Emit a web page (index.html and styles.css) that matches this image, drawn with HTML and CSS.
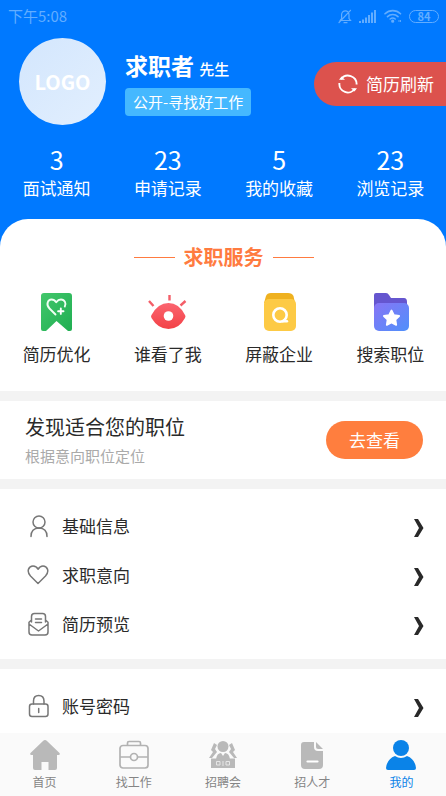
FILE: index.html
```html
<!DOCTYPE html>
<html lang="zh-CN">
<head>
<meta charset="utf-8">
<meta name="viewport" content="width=device-width, initial-scale=1">
<title>我的</title>
<link rel="stylesheet" href="styles.css">
</head>
<body>
<header class="hero">
  <div class="status">
    <span class="status-time">下午5:08</span>
    <div class="status-icons">
      <svg width="14" height="15" viewBox="0 0 14 15" fill="none" stroke="currentColor" stroke-width="1.2" stroke-linecap="round"><path d="M2 11.500h10.500L11 9.500V5.500a3.700 3.700 0 0 0-7.400 0v4L2 11.500M6 13.700h3M12.500 1.300 1 13.500"/></svg>
      <svg width="18" height="13" viewBox="0 0 18 13" fill="currentColor"><path d="M0 11h2v2H0zM3 9.500h2V13H3zM6 7.500h2V13H6zM9 5h2v8H9zM12 2.500h2V13h-2zM15 0h2v13h-2z"/></svg>
      <svg width="18" height="14" viewBox="0 0 18 14" fill="none" stroke="currentColor" stroke-width="1.600" stroke-linecap="round"><path d="M1 4.800a11 11 0 0 1 15.500 0M3.500 7.600a7.500 7.500 0 0 1 10.500 0M6.200 10a4 4 0 0 1 5 0"/><circle cx="8.700" cy="12.200" r=".8"/><path d="M15 11.500v1M16.500 11.500v1" stroke-width="1"/></svg>
      <span class="battery">84</span>
    </div>
  </div>
  <div class="profile">
    <div class="avatar">LOGO</div>
    <div class="identity">
      <h1 class="name">求职者 <small>先生</small></h1>
      <span class="tag">公开-寻找好工作</span>
    </div>
    <button class="refresh" type="button">
      <svg width="20" height="20" viewBox="0 0 20 20" fill="none" stroke="currentColor" stroke-width="1.900"><path d="M3 5.200A8.600 8.600 0 0 1 18.600 10.500M17 14.800A8.600 8.600 0 0 1 1.400 9"/><path d="M1 5.800 3.500 2.500l3.500 3.300zM19 14.200l-2.500 3.300-3.500-3.300z" fill="currentColor" stroke="none"/></svg>
      简历刷新
    </button>
  </div>
  <nav class="grid stats">
    <a href="#interviews"><b>3</b>面试通知</a>
    <a href="#applications"><b>23</b>申请记录</a>
    <a href="#favorites"><b>5</b>我的收藏</a>
    <a href="#history"><b>23</b>浏览记录</a>
  </nav>
</header>

<main class="content">
  <section class="services">
    <h2 class="services-title">求职服务</h2>
    <nav class="grid shortcuts">
      <a href="#optimize">
        <svg width="40" height="40" viewBox="0 0 40 40"><defs><linearGradient id="green" x2="1" y2="1"><stop stop-color="#42c76b"/><stop offset="1" stop-color="#20ae52"/></linearGradient></defs><path d="M7 1h25a3 3 0 0 1 3 3v33q0 2-2 2h-2L19.500 29 9 39H6q-2 0-2-2V4a3 3 0 0 1 3-3z" fill="url(#green)"/><path d="M18.500 22.500 12.500 16.500C8.500 12.500 11 7.500 14.500 7.500q2.800 0 4.700 2.800 2-2.800 4.800-2.800c3.800 0 5.500 4 3.800 7" fill="none" stroke="#effff3" stroke-width="1.900" stroke-linecap="round" stroke-linejoin="round"/><path d="M23.800 16.500v5.400M21.100 19.200h5.400" stroke="#fff" stroke-width="1.900" stroke-linecap="round"/></svg>
        简历优化</a>
      <a href="#viewers">
        <svg width="40" height="40" viewBox="0 0 40 40"><defs><linearGradient id="red" x2="0" y2="1"><stop stop-color="#fb6570"/><stop offset="1" stop-color="#f34146"/></linearGradient></defs><path d="M3.500 23Q10 11 20.500 11T37 23q1 1 0 3-6 11-16.500 11T3.500 26q-1-2 0-3z" fill="url(#red)"/><circle cx="20.500" cy="24" r="4.800" fill="#fff"/><path d="M21.500 8.500V3M5.500 14 1 9M32.500 13.500l5-4.500" fill="none" stroke="#f45e68" stroke-width="2.400"/></svg>
        谁看了我</a>
      <a href="#blocked">
        <svg width="40" height="40" viewBox="0 0 40 40"><path d="M12 1h17q4 0 5.500 3L36 11H5L7 4q1-3 5-3z" fill="#efb11f"/><rect x="5" y="7" width="32" height="32" rx="5" fill="#fdca45"/><circle cx="21" cy="23" r="6.700" fill="none" stroke="#fff" stroke-width="2.600"/><path d="M24 29.200h4" stroke="#fff" stroke-width="2.400" stroke-linecap="round"/></svg>
        屏蔽企业</a>
      <a href="#search">
        <svg width="40" height="40" viewBox="0 0 40 40"><defs><linearGradient id="violet" x2="1" y2="1"><stop stop-color="#8875f5"/><stop offset="1" stop-color="#4f90fb"/></linearGradient></defs><path d="M6 1h10q2 0 3 2l2 3h13q3 0 3 4v6H4V3q0-2 2-2z" fill="#6556cf"/><rect x="4" y="11" width="35" height="28" rx="5" fill="url(#violet)"/><path d="m21.500 18.500 2.400 4.700 5.200.8-3.700 3.700.8 5.200-4.700-2.400-4.700 2.400.8-5.200-3.700-3.700 5.200-.8z" fill="#fff" stroke="#fff" stroke-width="1.800" stroke-linejoin="round"/></svg>
        搜索职位</a>
    </nav>
  </section>

  <section class="discover">
    <div class="discover-text">
      <h2>发现适合您的职位</h2>
      <p>根据意向职位定位</p>
    </div>
    <button class="view" type="button">去查看</button>
  </section>

  <nav class="menu">
    <a href="#basic">
      <svg class="menu-icon" viewBox="0 0 22 24"><circle cx="12" cy="8" r="6"/><path d="M4 22.500q0-8.300 8-8.500 8 .2 8 8.500"/></svg>
      基础信息
      <svg class="chevron" viewBox="0 0 10 18"><path d="M0 0h4l5.500 9L4 18H0l5-9z"/></svg>
    </a>
    <a href="#intention">
      <svg class="menu-icon" viewBox="0 0 22 24"><path d="M11 20.500 3.500 13C-1 8 2 3 6 3q3.500 0 5 3.300Q13 3 16 3c4 0 7 5 2.500 10z"/></svg>
      求职意向
      <svg class="chevron" viewBox="0 0 10 18"><path d="M0 0h4l5.500 9L4 18H0l5-9z"/></svg>
    </a>
    <a href="#preview">
      <svg class="menu-icon" viewBox="0 0 22 24"><path d="M4.500 10V4.500q0-3 3-3h8q3 0 3 3V10M4.500 8 2 10.200V20q0 3 3 3h13q3 0 3-3v-9.800L18.500 8M2 12l9.500 7L21 12M8.500 7h6M8.500 10.500h6"/></svg>
      简历预览
      <svg class="chevron" viewBox="0 0 10 18"><path d="M0 0h4l5.500 9L4 18H0l5-9z"/></svg>
    </a>
  </nav>

  <nav class="menu menu-last">
    <a href="#password">
      <svg class="menu-icon" viewBox="0 0 22 24"><rect x="2.500" y="10" width="18.500" height="12.500" rx="2.500"/><path d="M6.500 10V7q0-5.500 5.200-5.500T17 7v3M11.700 14.500v4"/></svg>
      账号密码
      <svg class="chevron" viewBox="0 0 10 18"><path d="M0 0h4l5.500 9L4 18H0l5-9z"/></svg>
    </a>
  </nav>
</main>

<nav class="tabs">
  <a href="#home">
    <svg viewBox="0 0 32 32"><path d="M16 1q1 0 2 1l12.500 12q1 2-1 2H28v13q0 2-2 2h-6.500v-8h-7v8H6q-2 0-2-2V16H2.500q-2 0-1-2L14 2q1-1 2-1z" fill="#b9b9b9"/></svg>
    首页</a>
  <a href="#jobs">
    <svg viewBox="0 0 32 32" fill="none" stroke="#b2b2b2" stroke-width="1.700"><rect x="2" y="6.500" width="28" height="22.500" rx="3"/><path d="M9.500 6.500V4q0-1.500 1.500-1.500h10q1.500 0 1.500 1.500v2.500M2 18h10.500M19.500 18H30"/><circle cx="16" cy="18" r="3.500"/></svg>
    找工作</a>
  <a href="#fair">
    <svg viewBox="0 0 32 32"><g fill="#b9b9b9"><circle cx="16" cy="7.500" r="5.500"/><path d="M9 20q1-6 5-6l2 3 2-3q4 0 5 6zM7 4l3 2-2 4 2 3-5 6H2l4-6-2-2zM25 4l-3 2 2 4-2 3 5 6h3l-4-6 2-2zM4 19.500h24V29H4z"/></g><path d="M9.500 22.500h3.500v3.500H9.500zM16 22v5M19 22.500h3.500V26H19z" fill="none" stroke="#e6e6e6"/></svg>
    招聘会</a>
  <a href="#talent">
    <svg viewBox="0 0 32 32"><path d="M8 3h10v5q0 4 4 4h5v14q0 4-4 4H9q-4 0-4-4V6q0-3 3-3zM20 3l7 7h-5q-2 0-2-2z" fill="#b9b9b9"/><path d="M11.500 22.500h10" stroke="#fff" stroke-width="2.200" stroke-linecap="round"/></svg>
    招人才</a>
  <a class="active" href="#me" aria-current="page">
    <svg viewBox="0 0 32 32" fill="#0a83e8"><circle cx="16" cy="9" r="8"/><path d="M10 17q6 4 12 0 8 3 9 12 0 2-2 2H3q-2 0-2-2 1-9 9-12z"/></svg>
    我的</a>
</nav>
</body>
</html>
```
FILE: styles.css
```css
* {
  box-sizing: border-box;
}

body {
  display: flex;
  flex-direction: column;
  min-height: 100vh;
  margin: 0;
  background: #fff;
  color: #2a2a2a;
  font: 17px/24px "Noto Sans CJK SC", sans-serif;
}

a {
  color: inherit;
  text-decoration: none;
}

h1,
h2,
p {
  margin: 0;
  font-weight: 400;
}

button {
  border: 0;
  color: #fff;
  font: inherit;
}

svg {
  flex: none;
  display: block;
}

.hero {
  padding-bottom: 47px;
  background: #0079ff;
  color: #fff;
}

.status {
  display: flex;
  align-items: center;
  justify-content: space-between;
  height: 32px;
  padding: 0 7px 0 8px;
  color: #62adff;
  font-size: 15px;
}

.status-icons {
  display: flex;
  align-items: center;
  gap: 7px;
}

.battery {
  width: 30px;
  border: 1px solid;
  border-radius: 7px;
  font-size: 11px;
  font-weight: 700;
  line-height: 11px;
  text-align: center;
}

.profile {
  display: flex;
  align-items: center;
  padding: 6px 0 0 19px;
}

.avatar {
  flex: none;
  width: 87px;
  height: 87px;
  margin-bottom: 5px;
  border-radius: 50%;
  background: linear-gradient(135deg, #d3e6fd, #e2effe);
  color: #fff;
  font-size: 20px;
  font-weight: 700;
  line-height: 87px;
  text-align: center;
}

.identity {
  display: flex;
  flex-direction: column;
  align-items: flex-start;
  gap: 4px;
  margin-left: 19px;
  padding-bottom: 3px;
  white-space: nowrap;
}

.name {
  font-size: 23px;
  font-weight: 700;
  line-height: 30px;
}

.name small {
  font-size: 15px;
  font-weight: 500;
}

.tag {
  padding: 0 8px;
  border-radius: 4px;
  background: #45b8ff;
  font-size: 15px;
  line-height: 28px;
}

.refresh {
  display: flex;
  align-items: center;
  gap: 8px;
  height: 44px;
  margin-left: auto;
  padding: 0 12px 0 24px;
  border-radius: 22px 0 0 22px;
  background: #dc524d;
  white-space: nowrap;
}

.grid {
  display: grid;
  grid-template-columns: repeat(4, 1fr);
  padding-left: 1px;
}

.grid a {
  display: flex;
  flex-direction: column;
  align-items: center;
}

.stats {
  margin-top: 15px;
}

.stats b {
  margin-bottom: 3px;
  font-size: 25px;
  font-weight: 400;
  line-height: 28px;
}

.content {
  display: flex;
  flex: 1;
  flex-direction: column;
  gap: 10px;
  background: #f3f3f3;
}

.services {
  margin-top: -28px;
  padding: 23px 0 25px;
  border-radius: 28px 28px 0 0;
  background: #fff;
}

.services-title {
  display: flex;
  align-items: center;
  justify-content: center;
  gap: 9px;
  padding-left: 1px;
  color: #ff7b40;
  font-size: 20px;
  font-weight: 700;
  line-height: 30px;
}

.services-title::before,
.services-title::after {
  width: 41px;
  height: 1px;
  background: currentColor;
  content: "";
}

.shortcuts {
  margin-top: 20px;
}

.shortcuts a {
  gap: 10px;
}

.discover {
  display: flex;
  align-items: center;
  justify-content: space-between;
  padding: 11px 23px 11px 25px;
  background: #fff;
}

.discover h2 {
  font-size: 20px;
  line-height: 30px;
}

.discover p {
  margin-top: 2px;
  color: #aaa;
  font-size: 15px;
}

.view {
  width: 97px;
  height: 38px;
  padding: 0;
  border-radius: 19px;
  background: #ff7e3e;
}

.menu {
  padding: 12px 22px 11px 27px;
  background: #fff;
}

.menu-last {
  flex: 1;
  padding-bottom: 0;
}

.menu a {
  display: flex;
  align-items: center;
  height: 49px;
}

.menu-icon {
  width: 22px;
  height: 24px;
  margin-right: 13px;
  fill: none;
  stroke: #777;
  stroke-width: 1.5;
  stroke-linecap: round;
  stroke-linejoin: round;
}

.chevron {
  width: 10px;
  height: 18px;
  margin: 4px 0 0 auto;
  fill: #292929;
}

.tabs {
  position: sticky;
  bottom: 0;
  display: grid;
  grid-template-columns: repeat(5, 1fr);
  height: 63px;
  padding-top: 6px;
  background: #fafafa;
  color: #858585;
  font-size: 12px;
  line-height: 18px;
}

.tabs a {
  display: flex;
  flex-direction: column;
  align-items: center;
  gap: 2px;
}

.tabs svg {
  width: 32px;
  height: 32px;
}

.tabs .active {
  color: #0a83e8;
}
```
